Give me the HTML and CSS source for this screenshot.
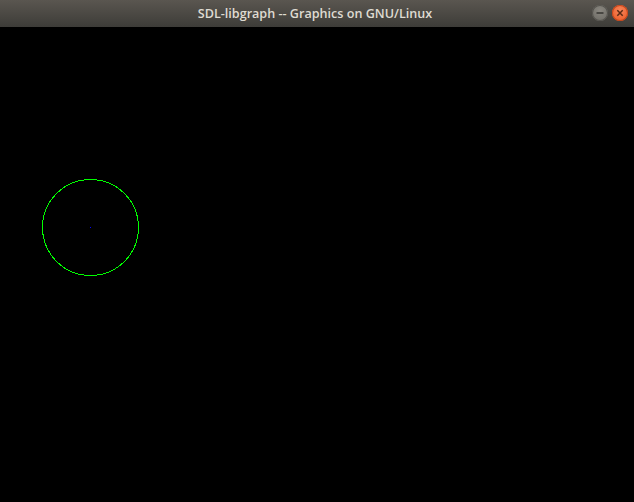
FILE: index.html
```html
<!DOCTYPE html>
<html>
<head>
<meta charset="utf-8">
<link rel="stylesheet" href="styles.css">
</head>
<body>
<div class="window">
  <div class="titlebar">
    <span class="title">SDL-libgraph -- Graphics on GNU/Linux</span>
    <div class="buttons">
      <span class="btn min"><svg width="16" height="16" viewBox="0 0 16 16"><line x1="4.5" y1="8" x2="11.5" y2="8" stroke="#3a3935" stroke-width="1.6"/></svg></span>
      <span class="btn close"><svg width="16" height="16" viewBox="0 0 16 16"><path d="M5.3 5.3 L10.7 10.7 M10.7 5.3 L5.3 10.7" stroke="#5a2a14" stroke-width="1.5"/></svg></span>
    </div>
  </div>
  <div class="canvas">
    <svg class="drawing" width="634" height="475" viewBox="0 0 634 475">
      <circle cx="90.5" cy="200.5" r="48" fill="none" stroke="#00ff00" stroke-width="1" shape-rendering="crispEdges"/>
      <rect x="90" y="200" width="1" height="1" fill="#0000ff"/>
    </svg>
  </div>
</div>
</body>
</html>
```
FILE: styles.css
```css
html, body {
  margin: 0;
  padding: 0;
  background: #000;
}
.window {
  width: 634px;
  height: 502px;
  display: flex;
  flex-direction: column;
  overflow: hidden;
}
.titlebar {
  height: 27px;
  flex: none;
  background: linear-gradient(#5a5650, #3d3c38);
  display: flex;
  align-items: center;
  justify-content: center;
  position: relative;
}
.title {
  font-family: "Open Sans", "DejaVu Sans", sans-serif;
  font-weight: 600;
  font-size: 12.6px;
  color: #dfdbd2;
  margin-left: -4px;
}
.buttons {
  position: absolute;
  right: 6px;
  top: 5px;
  display: flex;
  gap: 4px;
}
.btn {
  width: 16px;
  height: 16px;
  border-radius: 50%;
  display: flex;
}
.min {
  background: radial-gradient(circle at 50% 35%, #8a8780, #6a6862);
  box-shadow: inset 0 0 0 1px #55534e;
}
.close {
  background: radial-gradient(circle at 50% 35%, #f6855a, #e9551f);
  box-shadow: inset 0 0 0 1px #c4461c;
}
.canvas {
  flex: 1;
  background: #000;
}
.drawing {
  display: block;
}
```
